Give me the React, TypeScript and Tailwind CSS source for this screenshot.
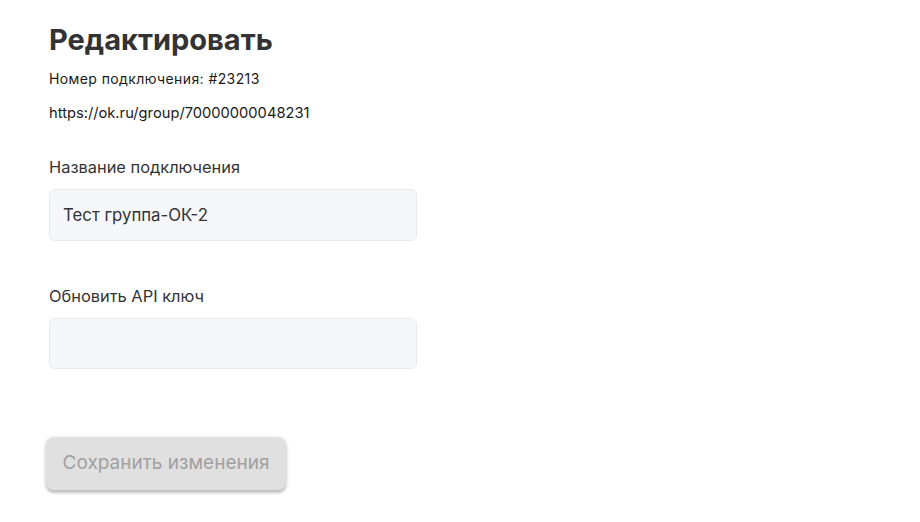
export default function App() {
    return (
        <div className="min-h-[522px] bg-white px-[49px] pt-[22px] text-[#333]" style={{ fontFamily: "Inter, 'Noto Sans', sans-serif" }}>
            <h1 className="text-[29px] font-bold leading-[36px] text-[#333]">Редактировать</h1>
            <p className="mt-[12px] text-[14px] leading-[18px] tracking-[0.4px] text-[#1a1a1a]">Номер подключения: #23213</p>
            <p className="mt-[16px] text-[14.7px] leading-[18px] text-[#1a1a1a]">https://ok.ru/group/70000000048231</p>

            <div className="mt-[34px] w-[368px]">
                <label className="block text-[16.4px] leading-[22px] text-[#333]">Название подключения</label>
                <input
                    className="mt-[11px] block h-[52px] w-full rounded-md border border-[#e8eaee] bg-[#f5f7fb] px-[13px] text-[16.8px] text-[#333] outline-none"
                    defaultValue="Тест группа-ОК-2"
                />
            </div>

            <div className="mt-[44px] w-[368px]">
                <label className="block text-[16.4px] leading-[22px] text-[#333]">Обновить API ключ</label>
                <input className="mt-[11px] block h-[51px] w-full rounded-md border border-[#e8eaee] bg-[#f5f7fb] px-[13px] text-[16.8px] outline-none" />
            </div>

            <button
                disabled
                className="-ml-[3px] mt-[68px] h-[53px] w-[240px] rounded-lg bg-[#e0e0e0] text-[19px] text-[#a0a0a0] shadow-[0_3px_3px_rgba(0,0,0,0.2),0_1px_5px_rgba(0,0,0,0.12)]"
            >
                Сохранить изменения
            </button>
        </div>
    );
}
